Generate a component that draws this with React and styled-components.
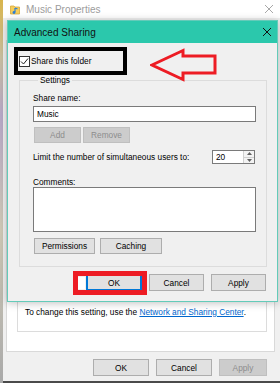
import React from 'react';
import styled, { createGlobalStyle } from 'styled-components';

const GlobalStyle = createGlobalStyle`
  html, body {
    margin: 0;
    padding: 0;
  }
  body {
    font-family: "Liberation Sans", Arial, sans-serif;
    font-size: 8.3px;
    color: #000;
    background: #f0f0f0;
  }
  * {
    box-sizing: border-box;
  }
`;

const Screen = styled.div`
  position: relative;
  width: 280px;
  height: 383px;
  overflow: hidden;
  display: flex;
  background: #f0f0f0;
`;

const DesktopEdge = styled.div`
  width: 3px;
  background: linear-gradient(to bottom, #d9b54c 0%, #c9bfa0 15%, #b7a8c8 30%, #cfc9b6 60%, #a9a9a9 100%);
`;

const PropsWindow = styled.div`
  flex: 1;
  display: flex;
  flex-direction: column;
  border-bottom: 2px solid #4a4a4a;
`;

const PropsTitleBar = styled.div`
  height: 18px;
  display: flex;
  align-items: center;
  padding: 0 6px 0 7px;
  background: #fff;
  color: #9c9c9c;
  font-size: 10px;

  span {
    margin-left: 6px;
    flex: 1;
  }
`;

const PropsContent = styled.div`
  flex: 1;
  display: flex;
  flex-direction: column;
  padding: 22px 5px 0 3px;
`;

const TabPanel = styled.div`
  flex: 1;
  display: flex;
  flex-direction: column;
  justify-content: flex-end;
  background: #fff;
  border: 1px solid #d9d9d9;
  padding: 0 7px 19px 10px;
`;

const PanelGroup = styled.div`
  height: 60px;
  display: flex;
  align-items: flex-end;
  border: 1px solid #dcdcdc;
  border-top: none;
  padding: 0 0 14px 7px;
  line-height: 10px;
  white-space: nowrap;
`;

const Link = styled.a`
  color: #0066cc;
  text-decoration: underline;
`;

const PropsFooter = styled.div`
  display: flex;
  justify-content: flex-end;
  gap: 7px;
  padding: 7px 13px 5px 0;
`;

const Button = styled.button`
  width: ${p => p.$w}px;
  height: ${p => p.$h || 16}px;
  padding: 0;
  font-family: inherit;
  font-size: 8.3px;
  color: ${p => (p.disabled ? '#8d8d8d' : '#000')};
  background: ${p => (p.disabled ? '#cccccc' : '#e1e1e1')};
  border: 1px solid ${p => (p.$focused ? '#0078d7' : p.disabled ? '#bfbfbf' : '#adadad')};
  box-shadow: ${p => (p.$focused ? 'inset 0 0 0 1px #0078d7' : 'none')};
`;

const Dialog = styled.div`
  position: absolute;
  left: 7px;
  top: 20px;
  width: 271px;
  height: 282px;
  display: flex;
  flex-direction: column;
  background: #f0f0f0;
  border: 1px solid #63cbb9;
  box-shadow: 0 1px 8px rgba(0, 0, 0, 0.25);
`;

const DialogTitle = styled.div`
  height: 22px;
  display: flex;
  align-items: center;
  justify-content: space-between;
  padding: 0 5px 0 6px;
  background: #2bc8ac;
  color: #111;
  font-size: 10px;
`;

const DialogBody = styled.div`
  flex: 1;
  display: flex;
  flex-direction: column;
  padding: 13px 10px 9px 11px;
`;

const CheckRow = styled.label`
  display: flex;
  align-items: center;
  gap: 1px;
  height: 11px;
  line-height: 11px;
`;

const CheckBox = styled.span`
  width: 11px;
  height: 11px;
  border: 1px solid #333;
  background: #fff;
  display: flex;
  align-items: center;
  justify-content: center;
`;

const GroupBox = styled.fieldset`
  margin: 8px 0 0;
  padding: 8px 10px 12px 13px;
  border: 1px solid #dcdcdc;
  min-width: 0;
  display: flex;
  flex-direction: column;

  legend {
    margin-left: 5px;
    padding: 0 2px;
    line-height: 10px;
  }
`;

const FieldLabel = styled.div`
  line-height: 10px;
  margin-top: ${p => p.$top || 0}px;
`;

const TextBox = styled.input`
  height: 16px;
  margin-top: 3px;
  padding: 0 3px;
  border: 1px solid #7a7a7a;
  background: #fff;
  font-family: inherit;
  font-size: 8.3px;
  outline: none;
`;

const ButtonRow = styled.div`
  display: flex;
  gap: ${p => p.$gap}px;
  margin: ${p => p.$top}px 0 0 1px;
`;

const LimitRow = styled.div`
  display: flex;
  align-items: center;
  justify-content: space-between;
  margin-top: 7px;
  padding-right: 1px;
  height: 14px;
`;

const Spin = styled.div`
  width: 43px;
  height: 14px;
  display: flex;
  border: 1px solid #7a7a7a;
  background: #fff;

  .value {
    flex: 1;
    padding-left: 3px;
    line-height: 12px;
  }
`;

const SpinArrows = styled.div`
  width: 11px;
  display: flex;
  flex-direction: column;
  border-left: 1px solid #d0d0d0;

  div {
    flex: 1;
    display: flex;
    align-items: center;
    justify-content: center;
    background: #f3f3f3;
  }

  div + div {
    border-top: 1px solid #d0d0d0;
  }
`;

const CommentBox = styled.div`
  height: 45px;
  border: 1px solid #7a7a7a;
  background: #fff;
`;

const DialogFooter = styled.div`
  display: flex;
  justify-content: flex-end;
  gap: 7px;
  margin-top: 7px;
  padding-right: 1px;
`;

const Callout = styled.div`
  position: absolute;
  left: ${p => p.$x}px;
  top: ${p => p.$y}px;
  width: ${p => p.$w}px;
  height: ${p => p.$h}px;
  border: ${p => p.$b}px solid ${p => p.$color};
  pointer-events: none;
`;

const OkCallout = styled(Callout)`
  &::before {
    content: '';
    position: absolute;
    left: 0;
    top: 1px;
    bottom: 1px;
    width: 7px;
    background: #fff;
  }
`;

const Arrow = styled.svg`
  position: absolute;
  left: 150px;
  top: 48px;
`;

function FolderIcon() {
  return (
    <svg width="10" height="11" viewBox="0 0 10 11">
      <path d="M0.5 2 H4 L5 3 H9.5 V10 H0.5 Z" fill="#f6cd5b" stroke="#d9a93a" strokeWidth="0.8" />
      <path d="M5 4 V8.2" stroke="#2b7fd6" strokeWidth="1.2" />
      <circle cx="4" cy="8.5" r="1.4" fill="#2b7fd6" />
      <path d="M5 4 L7.5 5" stroke="#2b7fd6" strokeWidth="1.2" />
    </svg>
  );
}

function CloseIcon({ color, size }) {
  return (
    <svg width={size} height={size} viewBox="0 0 10 10">
      <path d="M1 1 L9 9 M9 1 L1 9" stroke={color} strokeWidth="1" />
    </svg>
  );
}

export default function App() {
  return (
    <>
      <GlobalStyle />
      <Screen>
        <DesktopEdge />
        <PropsWindow>
          <PropsTitleBar>
            <FolderIcon />
            <span>Music Properties</span>
            <CloseIcon color="#a8a8a8" size={10} />
          </PropsTitleBar>
          <PropsContent>
            <TabPanel>
              <PanelGroup>
                <span>
                  To change this setting, use the <Link>Network and Sharing Center</Link>.
                </span>
              </PanelGroup>
            </TabPanel>
          </PropsContent>
          <PropsFooter>
            <Button $w={56} $h={17}>OK</Button>
            <Button $w={56} $h={17}>Cancel</Button>
            <Button $w={48} $h={17} disabled>Apply</Button>
          </PropsFooter>
        </PropsWindow>

        <Dialog>
          <DialogTitle>
            <span>Advanced Sharing</span>
            <CloseIcon color="#111" size={10} />
          </DialogTitle>
          <DialogBody>
            <CheckRow>
              <CheckBox>
                <svg width="9" height="9" viewBox="0 0 9 9">
                  <path d="M1 4.5 L3.5 7 L8 1.5" fill="none" stroke="#222" strokeWidth="1" />
                </svg>
              </CheckBox>
              Share this folder
            </CheckRow>
            <GroupBox>
              <legend>Settings</legend>
              <FieldLabel>Share name:</FieldLabel>
              <TextBox readOnly value="Music" />
              <ButtonRow $gap={2} $top={5}>
                <Button $w={47} disabled>Add</Button>
                <Button $w={47} disabled>Remove</Button>
              </ButtonRow>
              <LimitRow>
                <span>Limit the number of simultaneous users to:</span>
                <Spin>
                  <div className="value">20</div>
                  <SpinArrows>
                    <div>
                      <svg width="5" height="3" viewBox="0 0 5 3"><path d="M0 3 L2.5 0 L5 3 Z" fill="#606060" /></svg>
                    </div>
                    <div>
                      <svg width="5" height="3" viewBox="0 0 5 3"><path d="M0 0 L2.5 3 L5 0 Z" fill="#606060" /></svg>
                    </div>
                  </SpinArrows>
                </Spin>
              </LimitRow>
              <FieldLabel $top={13}>Comments:</FieldLabel>
              <CommentBox />
              <ButtonRow $gap={5} $top={6}>
                <Button $w={61}>Permissions</Button>
                <Button $w={62}>Caching</Button>
              </ButtonRow>
            </GroupBox>
            <DialogFooter>
              <Button $w={56} $h={17} $focused>OK</Button>
              <Button $w={55} $h={17}>Cancel</Button>
              <Button $w={55} $h={17}>Apply</Button>
            </DialogFooter>
          </DialogBody>
        </Dialog>

        <Callout $x={14} $y={47} $w={113} $h={28} $b={4} $color="#000" />
        <Arrow width="68" height="34" viewBox="0 0 68 34">
          <path
            d="M2 17 L33 2.5 L33 8 L65 8 L65 25 L33 25 L33 31.5 Z"
            fill="none"
            stroke="#ed1c24"
            strokeWidth="3"
          />
        </Arrow>
        <OkCallout $x={73} $y={271} $w={74} $h={24} $b={5} $color="#ed1c24" />
      </Screen>
    </>
  );
}
